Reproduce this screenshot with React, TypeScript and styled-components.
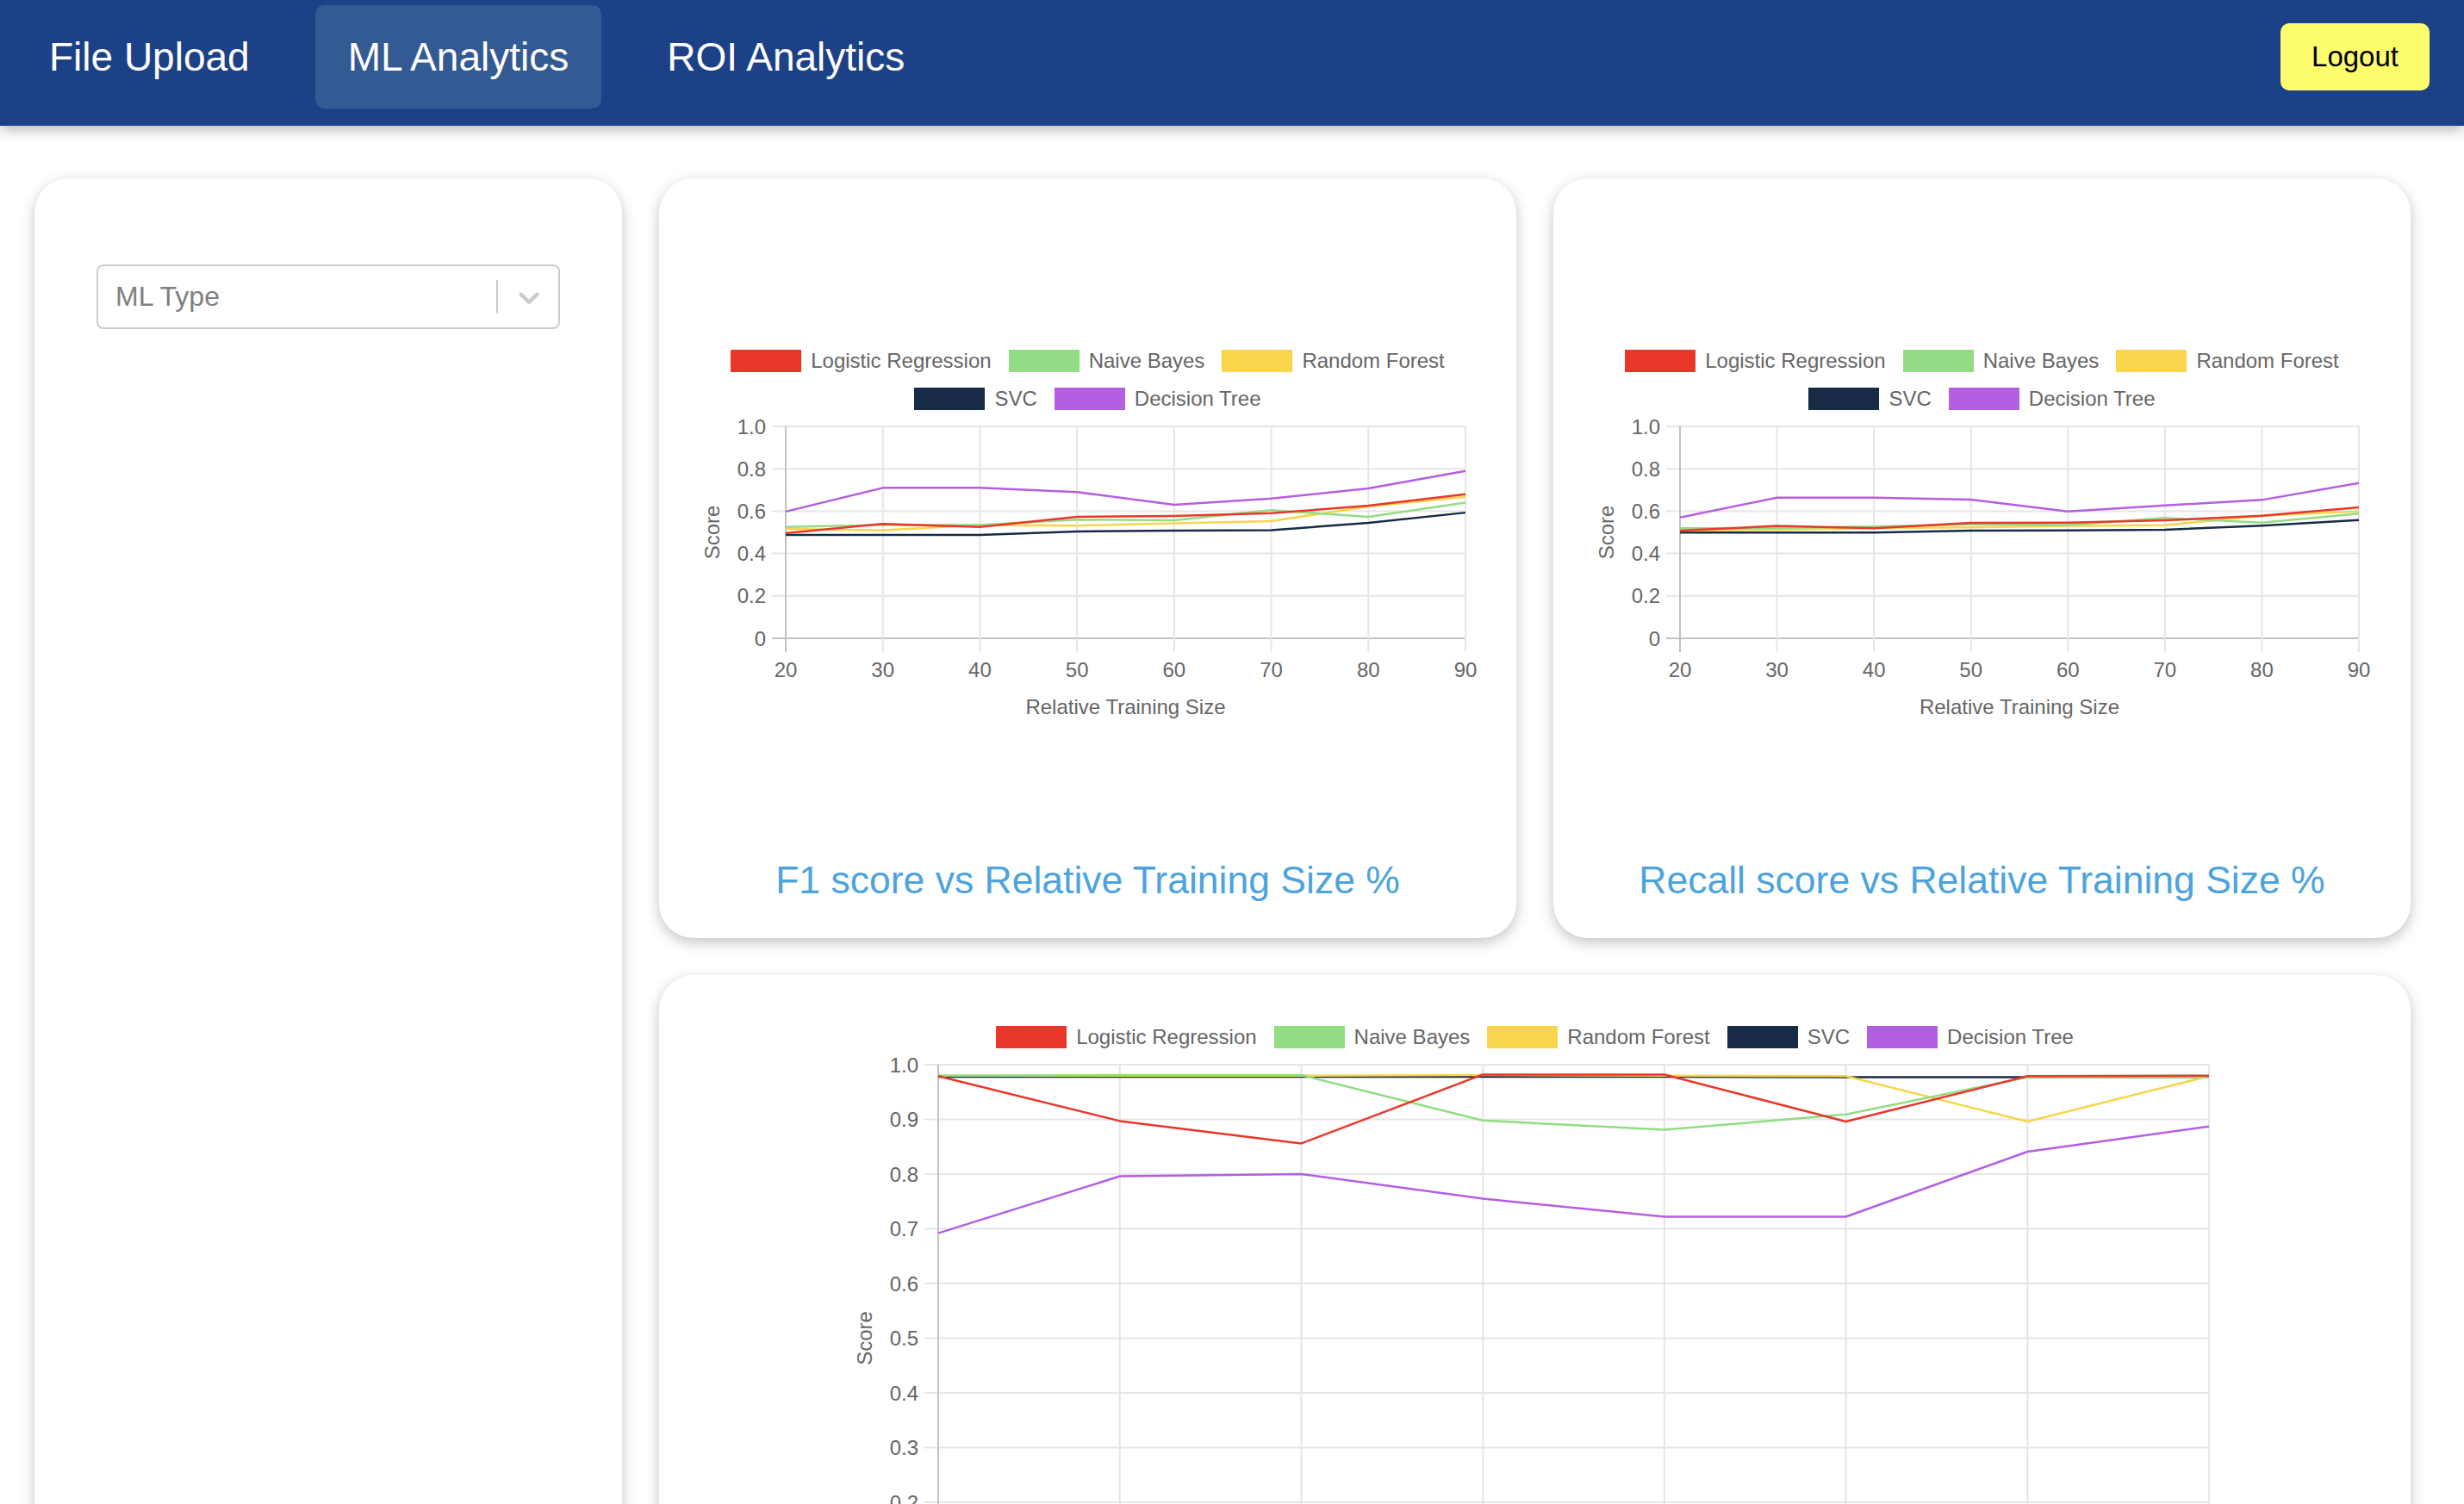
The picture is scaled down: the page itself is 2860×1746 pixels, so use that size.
import React from 'react';
import styled, { createGlobalStyle } from 'styled-components';

type Series = { label: string; color: string; data: number[] };

const COLORS = ['#E9372A', '#92DD83', '#F8D54A', '#172B47', '#B35FE2'];
const LABELS = ['Logistic Regression', 'Naive Bayes', 'Random Forest', 'SVC', 'Decision Tree'];

const makeSeries = (d: number[][]): Series[] =>
  d.map((data, i) => ({ label: LABELS[i], color: COLORS[i], data }));

const X_LABELS = ['20', '30', '40', '50', '60', '70', '80', '90'];

const F1_SERIES = makeSeries([
  [0.496, 0.54, 0.525, 0.573, 0.577, 0.59, 0.626, 0.68],
  [0.525, 0.535, 0.535, 0.56, 0.557, 0.605, 0.573, 0.64],
  [0.516, 0.51, 0.535, 0.532, 0.543, 0.553, 0.622, 0.668],
  [0.488, 0.488, 0.488, 0.504, 0.508, 0.51, 0.545, 0.593],
  [0.598, 0.71, 0.71, 0.69, 0.63, 0.66, 0.707, 0.79],
]);

const RECALL_SERIES = makeSeries([
  [0.508, 0.53, 0.519, 0.545, 0.546, 0.557, 0.578, 0.618],
  [0.519, 0.52, 0.527, 0.538, 0.535, 0.568, 0.546, 0.588],
  [0.508, 0.512, 0.52, 0.523, 0.53, 0.534, 0.578, 0.6],
  [0.499, 0.499, 0.499, 0.508, 0.509, 0.512, 0.532, 0.558],
  [0.57, 0.664, 0.664, 0.654, 0.599, 0.627, 0.653, 0.733],
]);

const PRECISION_SERIES = makeSeries([
  [0.979, 0.897, 0.856, 0.982, 0.982, 0.896, 0.979, 0.98],
  [0.98, 0.981, 0.981, 0.898, 0.881, 0.909, 0.977, 0.977],
  [0.98, 0.98, 0.98, 0.981, 0.98, 0.979, 0.896, 0.979],
  [0.978, 0.978, 0.978, 0.978, 0.978, 0.977, 0.977, 0.977],
  [0.692, 0.796, 0.8, 0.755, 0.722, 0.722, 0.841, 0.887],
]);

const GlobalStyle = createGlobalStyle`
  html, body {
    margin: 0;
    padding: 0;
    background: #ffffff;
  }
  body {
    font-family: "Liberation Sans", Arial, Helvetica, sans-serif;
  }
  *, *::before, *::after {
    box-sizing: border-box;
  }
`;

const NavBar = styled.header`
  position: relative;
  z-index: 2;
  height: 146px;
  background: #1c4186;
  display: flex;
  align-items: center;
  justify-content: space-between;
  padding: 6px 40px 20px 19px;
  box-shadow: 0 5px 14px rgba(0, 0, 0, 0.28);
`;

const NavLinks = styled.nav`
  display: flex;
  align-items: center;
  gap: 38px;
`;

const NavItem = styled.a<{ $active?: boolean }>`
  height: 120px;
  padding: 0 38px;
  display: flex;
  align-items: center;
  border-radius: 10px;
  font-size: 46px;
  color: #ffffff;
  text-decoration: none;
  background: ${(p) => (p.$active ? '#335a92' : 'transparent')};
`;

const LogoutButton = styled.button`
  width: 173px;
  height: 78px;
  border: none;
  border-radius: 10px;
  background: #fdfd6e;
  color: #000000;
  font-family: inherit;
  font-size: 33px;
  cursor: pointer;
`;

const Main = styled.main`
  display: grid;
  grid-template-columns: 682px 995px 995px;
  grid-template-rows: 882px auto;
  gap: 43px;
  padding: 61px 62px 0 40px;
`;

const Card = styled.section`
  background: #ffffff;
  border-radius: 40px;
  box-shadow: 0 5px 16px rgba(0, 0, 0, 0.24);
`;

const FilterCard = styled(Card)`
  grid-row: 1 / span 2;
  padding: 100px 72px;
`;

const ChartCard = styled(Card)<{ $padTop: number; $wide?: boolean }>`
  display: flex;
  flex-direction: column;
  align-items: center;
  padding: ${(p) => p.$padTop}px 0 40px;
  grid-column: ${(p) => (p.$wide ? '2 / span 2' : 'auto')};
`;

const Select = styled.div`
  height: 75px;
  border: 2px solid #cccccc;
  border-radius: 8px;
  display: flex;
  align-items: center;
  background: #ffffff;
`;

const Placeholder = styled.span`
  flex: 1;
  padding-left: 20px;
  font-size: 32px;
  color: #808080;
`;

const Separator = styled.span`
  width: 2px;
  height: 39px;
  background: #cccccc;
`;

const Indicator = styled.span`
  display: flex;
  align-items: center;
  padding: 0 14px 0 16px;
  color: #cccccc;
`;

const Legend = styled.div`
  display: flex;
  flex-direction: column;
  align-items: center;
  gap: 18px;
`;

const LegendRow = styled.div`
  display: flex;
  align-items: center;
  gap: 20px;
`;

const LegendItem = styled.div`
  display: flex;
  align-items: center;
  gap: 11px;
  height: 26px;
  font-size: 24px;
  color: #666666;
  white-space: nowrap;
`;

const Swatch = styled.span<{ $color: string }>`
  width: 82px;
  height: 26px;
  background: ${(p) => p.$color};
`;

const ChartSvg = styled.svg`
  display: block;
  flex-shrink: 0;
  font-family: "Liberation Sans", Arial, Helvetica, sans-serif;
  font-size: 24px;
  fill: #666666;
`;

const ChartTitle = styled.h2`
  margin: 139px 0 0;
  font-size: 44.5px;
  line-height: 53px;
  font-weight: 400;
  color: #4ca3dd;
  white-space: nowrap;
`;

type ChartProps = {
  width: number;
  height: number;
  left: number;
  top: number;
  right: number;
  bottom: number;
  yStep: number;
  series: Series[];
};

function LineChart({ width, height, left, top, right, bottom, yStep, series }: ChartProps) {
  const n = X_LABELS.length;
  const xs = X_LABELS.map((_, i) => left + (i * (right - left)) / (n - 1));
  const yOf = (v: number) => bottom - v * (bottom - top);
  const count = Math.round(1 / yStep);
  const ticks = Array.from({ length: count + 1 }, (_, i) => i * yStep);
  const cy = (top + bottom) / 2;
  const light = '#e6e6e6';
  const dark = '#c2c2c2';
  return (
    <ChartSvg width={width} height={height} viewBox={`0 0 ${width} ${height}`}>
      {ticks.map((t, i) => (
        <line
          key={`h${i}`}
          x1={left - 16}
          x2={right}
          y1={yOf(t)}
          y2={yOf(t)}
          stroke={i === 0 ? dark : light}
          strokeWidth={2}
        />
      ))}
      {xs.map((x, i) => (
        <line
          key={`v${i}`}
          x1={x}
          x2={x}
          y1={top}
          y2={bottom + 16}
          stroke={i === 0 ? dark : light}
          strokeWidth={2}
        />
      ))}
      {ticks.map((t, i) => (
        <text key={`yl${i}`} x={left - 23} y={yOf(t) + 8.5} textAnchor="end">
          {i === 0 ? '0' : t.toFixed(1)}
        </text>
      ))}
      {xs.map((x, i) => (
        <text key={`xl${i}`} x={x} y={bottom + 44.5} textAnchor="middle">
          {X_LABELS[i]}
        </text>
      ))}
      <text x={(left + right) / 2} y={bottom + 87.5} textAnchor="middle">
        Relative Training Size
      </text>
      <text transform={`translate(${left - 77} ${cy}) rotate(-90)`} textAnchor="middle">
        Score
      </text>
      {[...series].reverse().map((s) => (
        <polyline
          key={s.label}
          points={s.data.map((v, i) => `${xs[i]},${yOf(v)}`).join(' ')}
          fill="none"
          stroke={s.color}
          strokeWidth={2.5}
          strokeLinejoin="round"
        />
      ))}
    </ChartSvg>
  );
}

function ChartLegend({ series, rows }: { series: Series[]; rows: number[][] }) {
  return (
    <Legend>
      {rows.map((row, r) => (
        <LegendRow key={r}>
          {row.map((idx) => (
            <LegendItem key={series[idx].label}>
              <Swatch $color={series[idx].color} />
              {series[idx].label}
            </LegendItem>
          ))}
        </LegendRow>
      ))}
    </Legend>
  );
}

function Chevron() {
  return (
    <svg width="40" height="40" viewBox="0 0 20 20" fill="currentColor" aria-hidden="true">
      <path d="M4.516 7.548c0.436-0.446 1.043-0.481 1.576 0l3.908 3.747 3.908-3.747c0.533-0.481 1.141-0.446 1.574 0 0.436 0.445 0.408 1.197 0 1.615-0.406 0.418-4.695 4.502-4.695 4.502-0.217 0.223-0.502 0.335-0.787 0.335s-0.57-0.112-0.789-0.335c0 0-4.287-4.084-4.695-4.502s-0.436-1.17 0-1.615z" />
    </svg>
  );
}

const TWO_ROWS = [[0, 1, 2], [3, 4]];
const ONE_ROW = [[0, 1, 2, 3, 4]];

export default function App() {
  return (
    <>
      <GlobalStyle />
      <NavBar>
        <NavLinks>
          <NavItem href="#">File Upload</NavItem>
          <NavItem href="#" $active>
            ML Analytics
          </NavItem>
          <NavItem href="#">ROI Analytics</NavItem>
        </NavLinks>
        <LogoutButton>Logout</LogoutButton>
      </NavBar>
      <Main>
        <FilterCard>
          <Select>
            <Placeholder>ML Type</Placeholder>
            <Separator />
            <Indicator>
              <Chevron />
            </Indicator>
          </Select>
        </FilterCard>

        <ChartCard $padTop={199}>
          <ChartLegend series={F1_SERIES} rows={TWO_ROWS} />
          <LineChart width={995} height={380} left={147} top={19} right={936} bottom={265} yStep={0.2} series={F1_SERIES} />
          <ChartTitle>F1 score vs Relative Training Size %</ChartTitle>
        </ChartCard>

        <ChartCard $padTop={199}>
          <ChartLegend series={RECALL_SERIES} rows={TWO_ROWS} />
          <LineChart width={995} height={380} left={147} top={19} right={935} bottom={265} yStep={0.2} series={RECALL_SERIES} />
          <ChartTitle>Recall score vs Relative Training Size %</ChartTitle>
        </ChartCard>

        <ChartCard $padTop={59} $wide>
          <ChartLegend series={PRECISION_SERIES} rows={ONE_ROW} />
          <LineChart width={2034} height={760} left={324} top={19} right={1799} bottom={654} yStep={0.1} series={PRECISION_SERIES} />
          <ChartTitle>Precision score vs Relative Training Size %</ChartTitle>
        </ChartCard>
      </Main>
    </>
  );
}
